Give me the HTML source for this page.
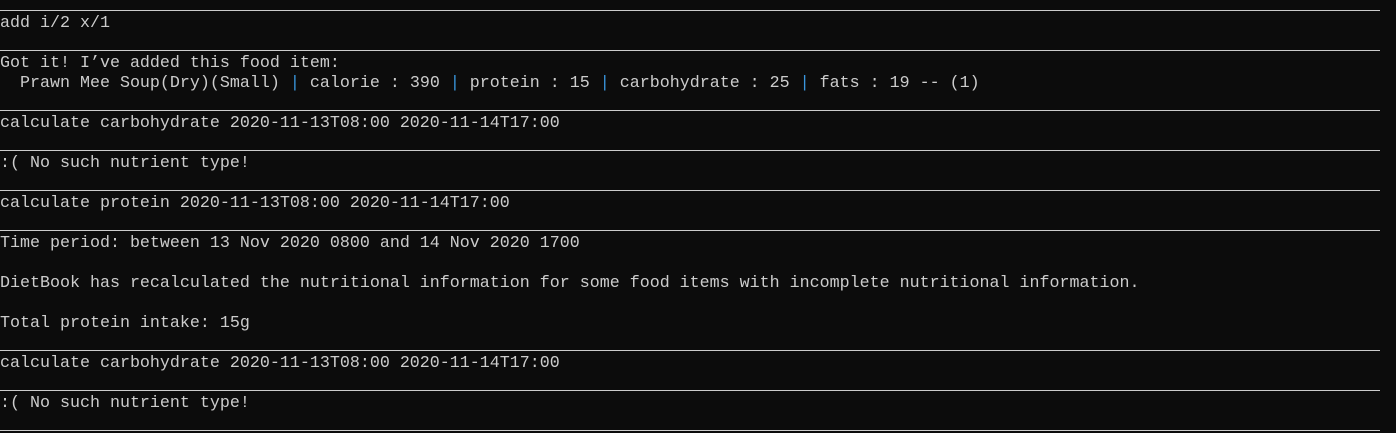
<!DOCTYPE html>
<html><head><style>
body{margin:0;width:1396px;height:433px;background:#0c0c0c;overflow:hidden;position:relative;font-family:"Liberation Mono","Noto Sans CJK SC",monospace;font-size:16.67px;color:#cccccc}
.l{position:absolute;left:0;width:1380px;height:1px;background:#cccccc}
.t{position:absolute;left:0;height:20px;line-height:20px;white-space:pre}
.p{color:#3a96dd}
</style></head><body>
<div class="l" style="top:10px"></div>
<div class="t" style="top:14px">add i/2 x/1</div>
<div class="l" style="top:50px"></div>
<div class="t" style="top:54px">Got it! I’ve added this food item:</div>
<div class="t" style="top:74px">  Prawn Mee Soup(Dry)(Small) <span class="p">|</span> calorie : 390 <span class="p">|</span> protein : 15 <span class="p">|</span> carbohydrate : 25 <span class="p">|</span> fats : 19 -- (1)</div>
<div class="l" style="top:110px"></div>
<div class="t" style="top:114px">calculate carbohydrate 2020-11-13T08:00 2020-11-14T17:00</div>
<div class="l" style="top:150px"></div>
<div class="t" style="top:154px">:( No such nutrient type!</div>
<div class="l" style="top:190px"></div>
<div class="t" style="top:194px">calculate protein 2020-11-13T08:00 2020-11-14T17:00</div>
<div class="l" style="top:230px"></div>
<div class="t" style="top:234px">Time period: between 13 Nov 2020 0800 and 14 Nov 2020 1700</div>
<div class="t" style="top:274px">DietBook has recalculated the nutritional information for some food items with incomplete nutritional information.</div>
<div class="t" style="top:314px">Total protein intake: 15g</div>
<div class="l" style="top:350px"></div>
<div class="t" style="top:354px">calculate carbohydrate 2020-11-13T08:00 2020-11-14T17:00</div>
<div class="l" style="top:390px"></div>
<div class="t" style="top:394px">:( No such nutrient type!</div>
<div class="l" style="top:430px"></div>
</body></html>
